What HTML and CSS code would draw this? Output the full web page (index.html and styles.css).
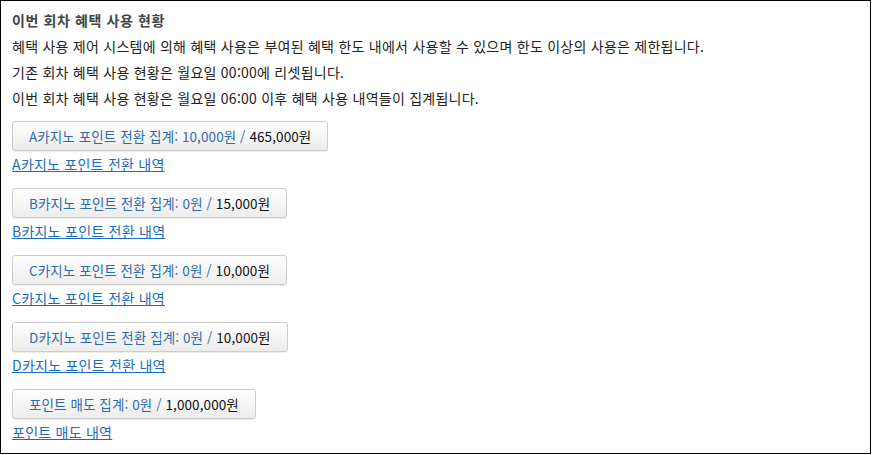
FILE: index.html
```html
<!DOCTYPE html>
<html lang="ko">
  <head>
    <meta charset="UTF-8" />
    <title>혜택 사용 현황</title>
    <link rel="stylesheet" href="styles.css">
  </head>
  <body>
    <div class="panel">
      <h3 class="title">이번 회차 혜택 사용 현황</h3>
      <p class="line">혜택 사용 제어 시스템에 의해 혜택 사용은 부여된 혜택 한도 내에서 사용할 수 있으며 한도 이상의 사용은 제한됩니다.</p>
      <p class="line">기존 회차 혜택 사용 현황은 월요일 00:00에 리셋됩니다.</p>
      <p class="line">이번 회차 혜택 사용 현황은 월요일 06:00 이후 혜택 사용 내역들이 집계됩니다.</p>

      <div class="usage">
        <button class="usage-btn">A카지노 포인트 전환 집계: 10,000원 / <span class="limit">465,000원</span></button>
        <a class="usage-link" href="#">A카지노 포인트 전환 내역</a>
      </div>
      <div class="usage">
        <button class="usage-btn">B카지노 포인트 전환 집계: 0원 / <span class="limit">15,000원</span></button>
        <a class="usage-link" href="#">B카지노 포인트 전환 내역</a>
      </div>
      <div class="usage">
        <button class="usage-btn">C카지노 포인트 전환 집계: 0원 / <span class="limit">10,000원</span></button>
        <a class="usage-link" href="#">C카지노 포인트 전환 내역</a>
      </div>
      <div class="usage">
        <button class="usage-btn">D카지노 포인트 전환 집계: 0원 / <span class="limit">10,000원</span></button>
        <a class="usage-link" href="#">D카지노 포인트 전환 내역</a>
      </div>
      <div class="usage">
        <button class="usage-btn">포인트 매도 집계: 0원 / <span class="limit">1,000,000원</span></button>
        <a class="usage-link" href="#">포인트 매도 내역</a>
      </div>
    </div>
  </body>
</html>
```

FILE: styles.css
```css
* {
  padding: 0;
  margin: 0;
  box-sizing: border-box;
}

body {
  font-family: "Noto Sans CJK KR", "Noto Sans", sans-serif;
  font-size: 14px;
  letter-spacing: 0.25px;
  color: #222;
}

.panel {
  width: 871px;
  height: 454px;
  padding: 7px 11px 6px;
  border: 1px solid #000;
}

.title {
  font-size: 14px;
  line-height: 25px;
  font-weight: bold;
  letter-spacing: 0.6px;
  color: #444;
}

.line {
  line-height: 26px;
}

.usage {
  padding-top: 10px;
}

.usage-btn {
  display: block;
  height: 30px;
  padding: 0 16px;
  font-family: inherit;
  font-size: 13.5px;
  letter-spacing: 0.1px;
  color: #2c6bb0;
  background: linear-gradient(#fff, #ececec);
  border: 1px solid #ccc;
  border-radius: 3px;
  box-shadow: 0 1px 1px rgba(0, 0, 0, 0.08);
}

.usage-btn .limit {
  color: #111;
}

.usage-link {
  display: block;
  line-height: 27px;
  color: #1a6cc0;
}
```
